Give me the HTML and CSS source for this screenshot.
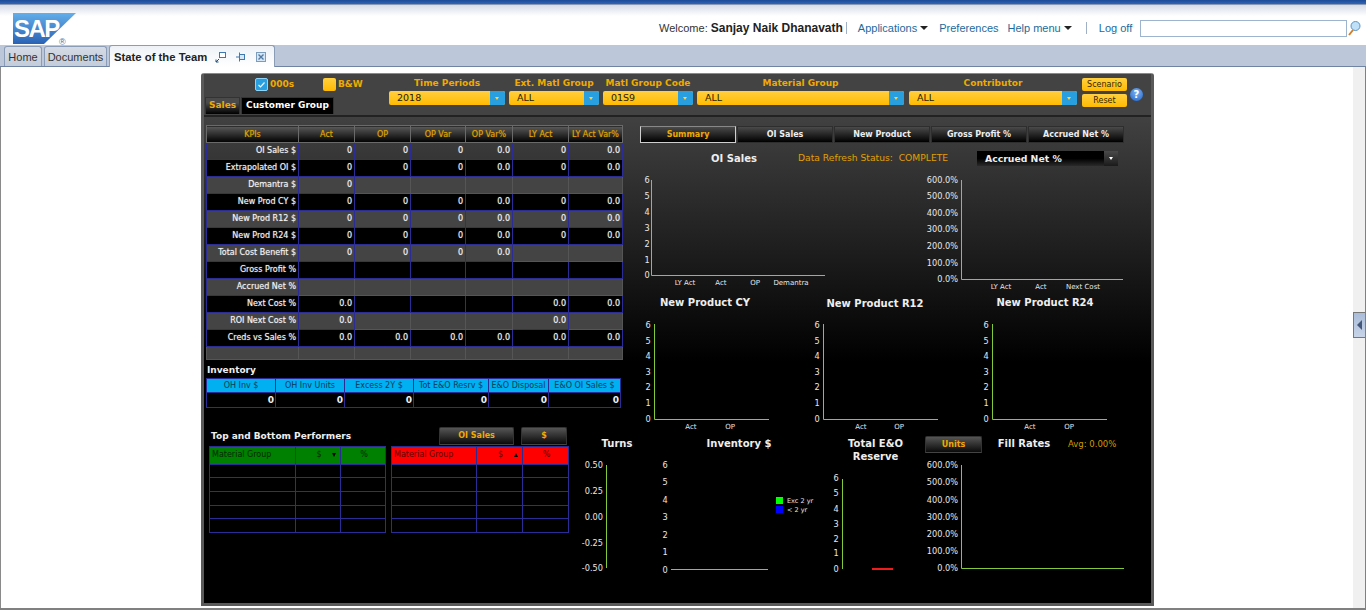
FILE: index.html
```html
<!DOCTYPE html>
<html lang="en">
<head>
    <meta charset="UTF-8">
    <title>State of the Team</title>
    <link rel="stylesheet" href="styles.css">
</head>
<body>
    <div class="top-stripe"></div>
    <header class="masthead">
        <svg class="logo" width="64" height="34" viewBox="0 0 64 34">
            <defs>
                <linearGradient id="sapBlue" x1="0" y1="0" x2="0" y2="1">
                    <stop offset="0" stop-color="#62aeea"/>
                    <stop offset="1" stop-color="#2a62b4"/>
                </linearGradient>
            </defs>
            <polygon points="0,0 63,0 31,31 0,31" fill="url(#sapBlue)"/>
            <text x="1" y="24" class="logo-word">SAP</text>
            <text x="46" y="32" class="logo-mark">®</text>
        </svg>
        <div class="userbar">
            <span>Welcome: <b>Sanjay Naik Dhanavath</b></span>
            <span class="pipe pipe-a"></span>
            <a class="link link-apps">Applications <i class="menu-arrow"></i></a>
            <a class="link link-prefs">Preferences</a>
            <a class="link link-help">Help menu <i class="menu-arrow"></i></a>
            <span class="pipe pipe-b"></span>
            <a class="link link-logoff">Log off</a>
            <div class="search-box"></div>
            <svg class="search-icon" width="14" height="16" viewBox="0 0 14 16">
                <line x1="6" y1="10" x2="2" y2="15" stroke="#d0802a" stroke-width="2"/>
                <circle cx="8.5" cy="6" r="4.5" fill="#bfe0f7" stroke="#5b93c4"/>
            </svg>
        </div>
    </header>

    <nav class="tabbar">
        <div class="tab tab-home">Home</div>
        <div class="tab tab-docs">Documents</div>
        <div class="tab tab-active">
            <span>State of the Team</span>
            <svg width="12" height="12" viewBox="0 0 12 12" class="tab-icon">
                <rect x="4.5" y="1.5" width="6" height="5" fill="#fff" stroke="#3f78b0"/>
                <path d="M1 11 L4 8 M1 8.500 V11 H3.500" fill="none" stroke="#1f4f80"/>
            </svg>
            <svg width="12" height="12" viewBox="0 0 12 12" class="tab-icon">
                <rect x="4.500" y="3.500" width="5" height="5" fill="#d7e6f5" stroke="#3f78b0"/>
                <path d="M1 6 H4.500 M4.500 1.500 V10.500" fill="none" stroke="#3f78b0"/>
            </svg>
            <svg width="12" height="12" viewBox="0 0 12 12" class="tab-icon">
                <rect x="1.500" y="1.500" width="9" height="9" fill="#d7e6f5" stroke="#7c9cbc"/>
                <path d="M3.500 3.500 L8.500 8.500 M8.500 3.500 L3.500 8.500" stroke="#4f7aa5" stroke-width="1.400"/>
            </svg>
        </div>
    </nav>

    <div class="workspace">
        <main class="canvas">
            <section class="dash">
                <div class="dash-head">
                    <div class="view-controls">
                        <div class="toggles">
                            <span class="check check-on">
                                <svg width="9" height="9" viewBox="0 0 9 9"><path d="M1.500 5 L3.500 7 L7.500 2.500" fill="none" stroke="#e8f6ff" stroke-width="1.200"/></svg>
                            </span>
                            <span class="toggle-label">000s</span>
                            <span class="check check-off"></span>
                            <span class="toggle-label">B&amp;W</span>
                        </div>
                        <div class="view-tabs">
                            <div class="view-tab view-tab-on">Sales</div>
                            <div class="view-tab">Customer Group</div>
                        </div>
                    </div>
                    <div class="filter f-time">
                        <label>Time Periods</label>
                        <div class="combo"><span>2018</span><i></i></div>
                    </div>
                    <div class="filter f-ext">
                        <label>Ext. Matl Group</label>
                        <div class="combo"><span>ALL</span><i></i></div>
                    </div>
                    <div class="filter f-code">
                        <label>Matl Group Code</label>
                        <div class="combo"><span>01S9</span><i></i></div>
                    </div>
                    <div class="filter f-group">
                        <label>Material Group</label>
                        <div class="combo"><span>ALL</span><i></i></div>
                    </div>
                    <div class="filter f-contrib">
                        <label>Contributor</label>
                        <div class="combo"><span>ALL</span><i></i></div>
                    </div>
                    <div class="head-btns">
                        <div class="amber-btn">Scenario</div>
                        <div class="amber-btn">Reset</div>
                    </div>
                    <div class="help">?</div>
                </div>

                <div class="dash-body">
                    <div class="upper">
                        <div class="left-col">
                            <table class="kpi">
                                <colgroup>
                                    <col class="c-name"><col class="c-a"><col class="c-a"><col class="c-b"><col class="c-c"><col class="c-a"><col class="c-d">
                                </colgroup>
                                <thead>
                                    <tr><th>KPIs</th><th>Act</th><th>OP</th><th>OP Var</th><th>OP Var%</th><th>LY Act</th><th>LY Act Var%</th></tr>
                                </thead>
                                <tbody>
                                    <tr class="clear"><td>OI Sales $</td><td>0</td><td>0</td><td>0</td><td>0.0</td><td>0</td><td>0.0</td></tr>
                                    <tr class="dark"><td>Extrapolated OI $</td><td>0</td><td>0</td><td>0</td><td>0.0</td><td>0</td><td>0.0</td></tr>
                                    <tr class="gray"><td>Demantra $</td><td>0</td><td class="no"></td><td class="no"></td><td class="no"></td><td class="no"></td><td class="no"></td></tr>
                                    <tr class="dark"><td>New Prod CY $</td><td>0</td><td>0</td><td>0</td><td>0.0</td><td>0</td><td>0.0</td></tr>
                                    <tr class="gray"><td>New Prod R12 $</td><td>0</td><td>0</td><td>0</td><td>0.0</td><td>0</td><td>0.0</td></tr>
                                    <tr class="dark"><td>New Prod R24 $</td><td>0</td><td>0</td><td>0</td><td>0.0</td><td>0</td><td>0.0</td></tr>
                                    <tr class="gray"><td>Total Cost Benefit $</td><td>0</td><td>0</td><td>0</td><td>0.0</td><td class="no"></td><td class="no"></td></tr>
                                    <tr class="dark"><td>Gross Profit %</td><td></td><td></td><td></td><td></td><td></td><td></td></tr>
                                    <tr class="gray"><td>Accrued Net %</td><td class="no"></td><td class="no"></td><td class="no"></td><td class="no"></td><td class="no"></td><td class="no"></td></tr>
                                    <tr class="dark"><td>Next Cost %</td><td>0.0</td><td></td><td></td><td></td><td>0.0</td><td>0.0</td></tr>
                                    <tr class="gray"><td>ROI Next Cost %</td><td>0.0</td><td class="no"></td><td class="no"></td><td class="no"></td><td>0.0</td><td class="no"></td></tr>
                                    <tr class="dark"><td>Creds vs Sales %</td><td>0.0</td><td>0.0</td><td>0.0</td><td>0.0</td><td>0.0</td><td>0.0</td></tr>
                                    <tr class="gray short"><td class="no"></td><td class="no"></td><td class="no"></td><td class="no"></td><td class="no"></td><td class="no"></td><td class="no"></td></tr>
                                </tbody>
                            </table>

                            <h3 class="inv-title">Inventory</h3>
                            <table class="inv">
                                <colgroup>
                                    <col class="i-a"><col class="i-a"><col class="i-a"><col class="i-b"><col class="i-c"><col class="i-d">
                                </colgroup>
                                <thead>
                                    <tr><th>OH Inv $</th><th>OH Inv Units</th><th>Excess 2Y $</th><th>Tot E&amp;O Resrv $</th><th>E&amp;O Disposal</th><th>E&amp;O OI Sales $</th></tr>
                                </thead>
                                <tbody>
                                    <tr><td>0</td><td>0</td><td>0</td><td>0</td><td>0</td><td>0</td></tr>
                                </tbody>
                            </table>
                        </div>

                        <div class="right-col">
                            <div class="summary-tabs">
                                <div class="sum-tab sum-tab-on">Summary</div>
                                <div class="sum-tab">OI Sales</div>
                                <div class="sum-tab">New Product</div>
                                <div class="sum-tab">Gross Profit %</div>
                                <div class="sum-tab">Accrued Net %</div>
                            </div>
                            <div class="status-row">
                                <div class="chart-title t-oi">OI Sales</div>
                                <div class="status">Data Refresh Status:&nbsp; COMPLETE</div>
                                <div class="dark-combo"><span>Accrued Net %</span><i></i></div>
                            </div>
                            <svg class="chart-row" width="516" height="124" viewBox="636 170 516 124">
                                <g class="ax" text-anchor="middle">
                                    <text x="647" y="183">6</text><text x="647" y="199">5</text><text x="647" y="215">4</text><text x="647" y="231">3</text><text x="647" y="247">2</text><text x="647" y="263">1</text><text x="647" y="278">0</text>
                                </g>
                                <path class="axis" d="M651.500 181 V276.500 H825"/>
                                <g class="cat" text-anchor="middle">
                                    <text x="685" y="285">LY Act</text><text x="721" y="285">Act</text><text x="755" y="285">OP</text><text x="791" y="285">Demantra</text>
                                </g>
                                <g class="ax" text-anchor="end">
                                    <text x="958" y="183">600.0%</text><text x="958" y="199">500.0%</text><text x="958" y="216">400.0%</text><text x="958" y="232">300.0%</text><text x="958" y="249">200.0%</text><text x="958" y="266">100.0%</text><text x="958" y="282">0.0%</text>
                                </g>
                                <path class="axis" d="M961.500 181 V280.500 H1123"/>
                                <g class="cat" text-anchor="middle">
                                    <text x="1001" y="289">LY Act</text><text x="1041" y="289">Act</text><text x="1083" y="289">Next Cost</text>
                                </g>
                            </svg>
                            <div class="title-row">
                                <div class="chart-title">New Product CY</div>
                                <div class="chart-title t-r12">New Product R12</div>
                                <div class="chart-title">New Product R24</div>
                            </div>
                            <svg class="chart-row" width="516" height="112" viewBox="636 316 516 112">
                                <g class="ax" text-anchor="middle">
                                    <text x="648" y="328">6</text><text x="648" y="344">5</text><text x="648" y="359">4</text><text x="648" y="375">3</text><text x="648" y="390">2</text><text x="648" y="406">1</text><text x="648" y="422">0</text>
                                    <text x="817" y="328">6</text><text x="817" y="344">5</text><text x="817" y="359">4</text><text x="817" y="375">3</text><text x="817" y="390">2</text><text x="817" y="406">1</text><text x="817" y="422">0</text>
                                    <text x="986" y="328">6</text><text x="986" y="344">5</text><text x="986" y="359">4</text><text x="986" y="375">3</text><text x="986" y="390">2</text><text x="986" y="406">1</text><text x="986" y="422">0</text>
                                </g>
                                <path class="axis" d="M654.500 325 V420.500 H769"/>
                                <path class="axis" d="M823.500 325 V420.500 H938"/>
                                <path class="axis" d="M992.500 325 V420.500 H1107"/>
                                <g class="cat" text-anchor="middle">
                                    <text x="691" y="429">Act</text><text x="730" y="429">OP</text>
                                    <text x="861" y="429">Act</text><text x="899" y="429">OP</text>
                                    <text x="1030" y="429">Act</text><text x="1069" y="429">OP</text>
                                </g>
                            </svg>
                        </div>
                    </div>

                    <div class="lower">
                        <div class="performers">
                            <div class="perf-head">
                                <h3>Top and Bottom Performers</h3>
                                <div class="dark-btn btn-oi">OI Sales</div>
                                <div class="dark-btn btn-usd">$</div>
                            </div>
                            <div class="perf-tables">
                                <table class="perf perf-top">
                                    <colgroup><col class="p-a"><col class="p-b"><col class="p-c"></colgroup>
                                    <thead><tr><th>Material Group</th><th class="sort">$<i class="sort-down"></i></th><th>%</th></tr></thead>
                                    <tbody>
                                        <tr class="r13"><td></td><td></td><td></td></tr>
                                        <tr><td></td><td></td><td></td></tr>
                                        <tr><td></td><td></td><td></td></tr>
                                        <tr class="r13"><td></td><td></td><td></td></tr>
                                        <tr><td></td><td></td><td></td></tr>
                                    </tbody>
                                </table>
                                <table class="perf perf-bottom">
                                    <colgroup><col class="p-d"><col class="p-e"><col class="p-e"></colgroup>
                                    <thead><tr><th>Material Group</th><th class="sort">$<i class="sort-up"></i></th><th>%</th></tr></thead>
                                    <tbody>
                                        <tr class="r13"><td></td><td></td><td></td></tr>
                                        <tr><td></td><td></td><td></td></tr>
                                        <tr><td></td><td></td><td></td></tr>
                                        <tr class="r13"><td></td><td></td><td></td></tr>
                                        <tr><td></td><td></td><td></td></tr>
                                    </tbody>
                                </table>
                            </div>
                        </div>

                        <div class="lower-charts">
                            <div class="lower-titles">
                                <div class="chart-title lt-turns">Turns</div>
                                <div class="chart-title lt-inv">Inventory $</div>
                                <div class="chart-title lt-eo">Total E&amp;O<br>Reserve</div>
                                <div class="dark-btn btn-units">Units</div>
                                <div class="chart-title lt-fill">Fill Rates</div>
                                <div class="avg">Avg: 0.00%</div>
                            </div>
                            <svg class="chart-row" width="576" height="125" viewBox="576 460 576 125">
                                <g class="ax" text-anchor="end">
                                    <text x="603" y="468">0.50</text><text x="603" y="494">0.25</text><text x="603" y="520">0.00</text><text x="603" y="546">-0.25</text><text x="603" y="571">-0.50</text>
                                </g>
                                <path class="axis" d="M606.500 466 V569"/>
                                <g class="ax" text-anchor="middle">
                                    <text x="665" y="468">6</text><text x="665" y="485">5</text><text x="665" y="503">4</text><text x="665" y="520">3</text><text x="665" y="538">2</text><text x="665" y="555">1</text><text x="665" y="573">0</text>
                                </g>
                                <path class="axis" d="M671 570.500 H768"/>
                                <rect x="776" y="498" width="7" height="7" fill="#00ff00"/>
                                <rect x="776" y="507" width="7" height="7" fill="#0000ff"/>
                                <text class="legend" x="787" y="504">Exc 2 yr</text>
                                <text class="legend" x="787" y="513">&lt; 2 yr</text>
                                <g class="ax" text-anchor="middle">
                                    <text x="836" y="481">6</text><text x="836" y="496">5</text><text x="836" y="512">4</text><text x="836" y="527">3</text><text x="836" y="542">2</text><text x="836" y="556">1</text><text x="836" y="572">0</text>
                                </g>
                                <path class="axis" d="M842.500 480 V570"/>
                                <rect x="872" y="569" width="21" height="2" fill="#ee1c1c"/>
                                <g class="ax" text-anchor="end">
                                    <text x="958" y="468">600.0%</text><text x="958" y="485">500.0%</text><text x="958" y="503">400.0%</text><text x="958" y="520">300.0%</text><text x="958" y="537">200.0%</text><text x="958" y="554">100.0%</text><text x="958" y="571">0.0%</text>
                                </g>
                                <path class="axis" d="M961.500 466 V569.500 H1124"/>
                            </svg>
                        </div>
                    </div>
                </div>
            </section>
        </main>
        <aside class="side-panel">
            <div class="collapse-btn"><i></i></div>
        </aside>
    </div>
</body>
</html>
```

FILE: styles.css
```css
html, body {
    margin: 0;
    padding: 0;
}
body {
    width: 1366px;
    height: 613px;
    overflow: hidden;
    background: #fff;
    font-family: "Liberation Sans", Arial, sans-serif;
    color: #333;
}

/* portal chrome */
.top-stripe {
    height: 5px;
    background: linear-gradient(#1c4a96, #2f66b8);
    border-bottom: 1px solid #8b9ab3;
    box-sizing: border-box;
}
.masthead {
    height: 40px;
    display: flex;
    background: linear-gradient(#d6dce8, #fff 11px);
}
.logo {
    margin: 8px 0 0 13px;
    flex: none;
}
.logo-word {
    font-family: "Liberation Sans", sans-serif;
    font-weight: bold;
    font-size: 24px;
    letter-spacing: -1.5px;
    fill: #fff;
}
.logo-mark {
    font-size: 9px;
    fill: #3a6fb8;
}
.userbar {
    flex: 1;
    display: flex;
    align-items: center;
    height: 34px;
    padding: 12px 0 0 582px;
    box-sizing: border-box;
    font-size: 11px;
    color: #333;
    white-space: nowrap;
}
.userbar b {
    font-size: 12px;
    color: #222;
}
.pipe {
    width: 1px;
    height: 12px;
    background: #9fb0c4;
}
.pipe-a {
    margin-left: 3px;
}
.pipe-b {
    margin-left: 14px;
}
.link {
    color: #1c6a9c;
}
.link-apps {
    margin-left: 11px;
}
.link-prefs {
    margin-left: 11px;
}
.link-help {
    margin-left: 9px;
}
.link-logoff {
    margin-left: 12px;
}
.menu-arrow {
    display: inline-block;
    width: 0;
    height: 0;
    border: 4px solid transparent;
    border-top: 4px solid #222;
    border-bottom: 0;
    vertical-align: 2px;
}
.search-box {
    width: 205px;
    height: 15px;
    margin-left: 8px;
    background: #fff;
    border: 1px solid #9db4cf;
    flex: none;
}
.search-icon {
    flex: none;
}
.tabbar {
    height: 22px;
    box-sizing: border-box;
    display: flex;
    align-items: flex-end;
    gap: 2px;
    padding-left: 4px;
    background: #bcc7d9;
    border-bottom: 1px solid #6f83a3;
}
.tab {
    height: 20px;
    box-sizing: border-box;
    display: flex;
    align-items: center;
    justify-content: center;
    font-size: 11px;
    color: #333;
    background: linear-gradient(#d5dbe5, #c3ccda);
    border: 1px solid #8b9cb6;
    border-bottom: 0;
    border-radius: 3px 3px 0 0;
}
.tab-home {
    width: 38px;
}
.tab-docs {
    width: 63px;
}
.tab-active {
    height: 22px;
    width: 166px;
    margin: 0 0 -1px 0;
    padding: 0 0 0 4px;
    justify-content: flex-start;
    background: linear-gradient(#eef2f7, #fff);
    font-weight: bold;
    font-size: 11.3px;
    color: #222;
}
.tab-active span {
    width: 101px;
    flex: none;
    white-space: nowrap;
}
.tab-icon {
    margin-right: 8px;
    flex: none;
}
.workspace {
    height: 543px;
    box-sizing: border-box;
    display: flex;
    border-bottom: 2px solid #808080;
}
.canvas {
    flex: 1;
    background: #fff;
    border-left: 1px solid #8a8a8a;
    padding: 6px 0 0 200px;
}
.side-panel {
    width: 13px;
    flex: none;
    background: #f0f0f0;
    border-right: 1px solid #808080;
    box-sizing: border-box;
    padding-top: 245px;
}
.collapse-btn {
    height: 26px;
    box-sizing: border-box;
    border: 1px solid #777;
    border-right: 0;
    background: linear-gradient(#a9bcd9, #c7d4e8);
    display: flex;
    align-items: center;
    justify-content: center;
}
.collapse-btn i {
    width: 0;
    height: 0;
    border: 5px solid transparent;
    border-right: 5px solid #44597a;
    border-left: 0;
}

/* dashboard frame */
.dash {
    width: 953px;
    height: 533px;
    box-sizing: border-box;
    border: 3px solid #5a5a5a;
    border-top: 1px solid #8a8a8a;
    border-radius: 3px 3px 0 0;
    background: #444;
    font-family: "DejaVu Sans", Verdana, sans-serif;
    display: flex;
    flex-direction: column;
}
.dash-head {
    height: 41px;
    flex: none;
    display: flex;
    box-sizing: border-box;
    padding-top: 3px;
    background: #434343;
}
.view-controls {
    width: 185px;
    flex: none;
}
.toggles {
    display: flex;
    align-items: center;
    height: 14px;
    padding-left: 51px;
}
.check {
    width: 13px;
    height: 13px;
    box-sizing: border-box;
    border-radius: 2px;
    flex: none;
    display: flex;
    align-items: center;
    justify-content: center;
}
.check-on {
    background: #2a9fe0;
    border: 1px solid #8fd4fa;
}
.check-off {
    background: linear-gradient(#ffd040, #ffbb00);
    margin-left: 28px;
}
.toggle-label {
    margin-left: 2px;
    width: 25px;
    font-size: 9px;
    font-weight: bold;
    color: #f0aa00;
}
.view-tabs {
    display: flex;
    margin-top: 6px;
    padding-left: 1px;
    gap: 1px;
}
.view-tab {
    height: 17px;
    line-height: 15px;
    padding: 0 4px;
    box-sizing: border-box;
    font-size: 9px;
    font-weight: bold;
    color: #fff;
    background: #000;
    border: 1px solid #333;
    border-bottom: 0;
    white-space: nowrap;
}
.view-tab-on {
    padding: 0 3px;
    color: #f0aa00;
    background: linear-gradient(#4a4a4a 30%, #000);
}
.filter {
    flex: none;
    margin-right: 4px;
}
.filter label {
    display: block;
    height: 14px;
    line-height: 13px;
    text-align: center;
    font-size: 9px;
    font-weight: bold;
    color: #f0aa00;
    white-space: nowrap;
}
.f-time {
    width: 116px;
}
.f-ext {
    width: 90px;
}
.f-code {
    width: 90px;
}
.f-group {
    width: 207px;
    margin-right: 5px;
}
.f-contrib {
    width: 168px;
    margin-right: 5px;
}
.combo {
    height: 14px;
    display: flex;
    background: linear-gradient(#ffd040, #ffbb00);
    border-radius: 2px;
    font-size: 9.5px;
    line-height: 14px;
    color: #2a2000;
}
.combo span {
    flex: 1;
    padding-left: 8px;
}
.combo i {
    width: 15px;
    background: #2a9fe0;
    border-radius: 0 2px 2px 0;
    position: relative;
}
.combo i::after {
    content: "";
    position: absolute;
    left: 5px;
    top: 6px;
    border: 2px solid transparent;
    border-top: 3px solid #ffd040;
    border-bottom: 0;
}
.head-btns {
    width: 45px;
    flex: none;
    display: flex;
    flex-direction: column;
    gap: 3px;
    padding-top: 1px;
}
.amber-btn {
    height: 13px;
    line-height: 13px;
    text-align: center;
    font-size: 8px;
    color: #332600;
    background: linear-gradient(#ffd040, #ffbb00);
    border-radius: 2px;
}
.help {
    width: 13px;
    height: 13px;
    margin: 11px 0 0 3px;
    border-radius: 50%;
    background: radial-gradient(circle at 50% 35%, #7fb2f0, #1e62c8);
    color: #fff;
    font-size: 10px;
    font-weight: bold;
    line-height: 13px;
    text-align: center;
}
.dash-body {
    flex: 1;
    border-top: 2px solid #222;
    background: linear-gradient(#414141, #000 245px);
    display: flex;
    flex-direction: column;
}

/* upper part: kpi table and summary charts */
.upper {
    height: 310px;
    flex: none;
    display: flex;
}
.left-col {
    width: 432px;
    flex: none;
    box-sizing: border-box;
    padding: 8px 0 0 2px;
}
.kpi, .inv, .perf {
    border-collapse: collapse;
    table-layout: fixed;
    font-size: 8px;
}
.kpi {
    width: 416px;
}
.c-name { width: 92px; }
.c-a { width: 56px; }
.c-b { width: 55px; }
.c-c { width: 47px; }
.c-d { width: 54px; }
.kpi th {
    height: 16px;
    padding: 0;
    font-weight: normal;
    color: #e0a400;
    text-shadow: 0 0 1px rgba(224, 164, 0, 0.6);
    background: linear-gradient(#5a5a5a, #000);
    border: 1px solid #6a6a6a;
    white-space: nowrap;
}
.kpi td {
    height: 16px;
    box-sizing: border-box;
    padding: 0 2px 2px 0;
    text-align: right;
    color: #f2f2f2;
    text-shadow: 0 0 1px rgba(255, 255, 255, 0.6);
    border: 1px solid #2c2c96;
    white-space: nowrap;
    overflow: hidden;
}
.kpi tbody tr {
    height: 17px;
}
.kpi tbody tr.short {
    height: 13px;
}
.dark td {
    background: #000;
}
.gray td {
    background: #444;
}
.gray td.no {
    border-color: #555;
}
.short td {
    height: 12px;
}
.inv-title {
    margin: 3px 0 0 1px;
    height: 15px;
    line-height: 14px;
    font-size: 9px;
    font-weight: bold;
    color: #eee;
}
.inv {
    width: 414px;
}
.i-a { width: 69px; }
.i-b { width: 75px; }
.i-c { width: 60px; }
.i-d { width: 72px; }
.inv th {
    height: 13px;
    padding: 0;
    font-weight: normal;
    color: #063a55;
    background: #00b0f0;
    border: 1px solid #2c2c96;
    white-space: nowrap;
}
.inv td {
    height: 14px;
    padding: 0 1px 0 0;
    text-align: right;
    font-size: 9px;
    font-weight: bold;
    color: #eee;
    background: #000;
    border: 1px solid #2c2c96;
}
.right-col {
    flex: 1;
    min-width: 0;
}
.ax, .cat {
    transform: translateY(1px);
}
.summary-tabs {
    display: flex;
    gap: 1px;
    padding: 9px 0 0 4px;
}
.sum-tab {
    width: 96px;
    height: 17px;
    line-height: 16px;
    box-sizing: border-box;
    text-align: center;
    font-size: 8px;
    font-weight: bold;
    color: #eee;
    background: linear-gradient(#4a4a4a, #000);
    border: 1px solid #2e2e2e;
}
.sum-tab-on {
    color: #f0aa00;
    border: 1px solid #cfcfcf;
    border-top-color: #888;
}
.status-row {
    height: 26px;
    display: flex;
    align-items: flex-start;
    padding: 6px 0 0 34px;
    box-sizing: border-box;
}
.chart-title {
    line-height: 16px;
    text-align: center;
    font-size: 10px;
    font-weight: bold;
    color: #eee;
    white-space: nowrap;
}
.t-oi {
    width: 128px;
    padding-top: 2px;
}
.status {
    width: 179px;
    padding-top: 1px;
    line-height: 16px;
    font-size: 9.2px;
    color: #e0a000;
    white-space: nowrap;
}
.dark-combo {
    width: 141px;
    height: 15px;
    margin-top: 2px;
    display: flex;
    background: linear-gradient(#000 50%, #2a2a2a);
    font-size: 9.3px;
    font-weight: bold;
    color: #eee;
    line-height: 16px;
}
.dark-combo span {
    flex: 1;
    padding-left: 8px;
}
.dark-combo i {
    width: 14px;
    background: linear-gradient(#4a4a4a, #1a1a1a);
    position: relative;
}
.dark-combo i::after {
    content: "";
    position: absolute;
    left: 5px;
    top: 6px;
    border: 2px solid transparent;
    border-top: 3px solid #fff;
    border-bottom: 0;
}
.chart-row {
    display: block;
    overflow: visible;
}
.ax text {
    font-size: 8.2px;
    fill: #e8e8e8;
}
.cat text {
    font-size: 7px;
    fill: #e8e8e8;
}
.legend {
    font-size: 6.5px;
    fill: #e8e8e8;
}
.axis {
    fill: none;
    stroke: #84c83c;
    stroke-width: 1;
}
.title-row {
    height: 22px;
    padding-top: 2px;
    display: grid;
    grid-template-columns: 138px 202px 138px;
    box-sizing: border-box;
}
.t-r12 {
    padding-top: 1px;
}

/* lower part: performers and inventory charts */
.lower {
    flex: 1;
    display: flex;
}
.performers {
    width: 372px;
    flex: none;
    padding-left: 5px;
    box-sizing: border-box;
}
.perf-head {
    height: 19px;
    display: flex;
    align-items: flex-start;
}
.perf-head h3 {
    width: 230px;
    margin: 2px 0 0 2px;
    flex: none;
    line-height: 14px;
    font-size: 9px;
    font-weight: bold;
    color: #eee;
    white-space: nowrap;
}
.dark-btn {
    height: 18px;
    line-height: 16px;
    box-sizing: border-box;
    text-align: center;
    font-size: 8px;
    font-weight: bold;
    color: #f0aa00;
    background: linear-gradient(#555, #0a0a0a);
    border: 1px solid #333;
    border-bottom-color: #444;
    border-radius: 2px 2px 0 0;
    flex: none;
}
.btn-oi {
    width: 75px;
    margin-left: -2px;
}
.btn-usd {
    width: 46px;
    margin-left: 7px;
}
.perf-tables {
    display: flex;
    gap: 5px;
}
.perf th {
    height: 15px;
    padding: 0 0 2px 2px;
    font-weight: normal;
    font-size: 8px;
    text-align: left;
    border: 1px solid #2c2c96;
    white-space: nowrap;
    position: relative;
}
.perf th + th {
    text-align: center;
}
.perf td {
    height: 13px;
    padding: 0;
    background: #000;
    border: 1px solid #2c2c96;
}
.perf .r13 td {
    height: 12px;
}
.perf-top {
    width: 176px;
}
.perf-bottom {
    width: 177px;
}
.p-a { width: 86px; }
.p-b { width: 45px; }
.p-c { width: 45px; }
.p-d { width: 85px; }
.p-e { width: 46px; }
.perf-top th {
    background: #008000;
    color: #012a01;
}
.perf-bottom th {
    background: #ff0000;
    color: #5a0000;
}
.perf .sort-down, .perf .sort-up {
    position: absolute;
    right: 4px;
    top: 6px;
    border: 2px solid transparent;
}
.perf .sort-down {
    border-top: 4px solid #000;
    border-bottom: 0;
}
.perf .sort-up {
    border-bottom: 4px solid #000;
    border-top: 0;
}
.lower-charts {
    flex: 1;
    min-width: 0;
}
.lower-titles {
    height: 32px;
    box-sizing: border-box;
    display: flex;
    align-items: flex-start;
    padding-top: 9px;
}
.lt-turns {
    width: 82px;
}
.lt-inv {
    width: 162px;
    margin-right: 6px;
}
.lt-eo {
    width: 99px;
    line-height: 13px;
    padding-top: 1px;
}
.btn-units {
    width: 57px;
    height: 17px;
}
.lt-fill {
    width: 84px;
}
.avg {
    margin-left: 2px;
    line-height: 16px;
    font-size: 8.5px;
    color: #d09a00;
    white-space: nowrap;
}
```
